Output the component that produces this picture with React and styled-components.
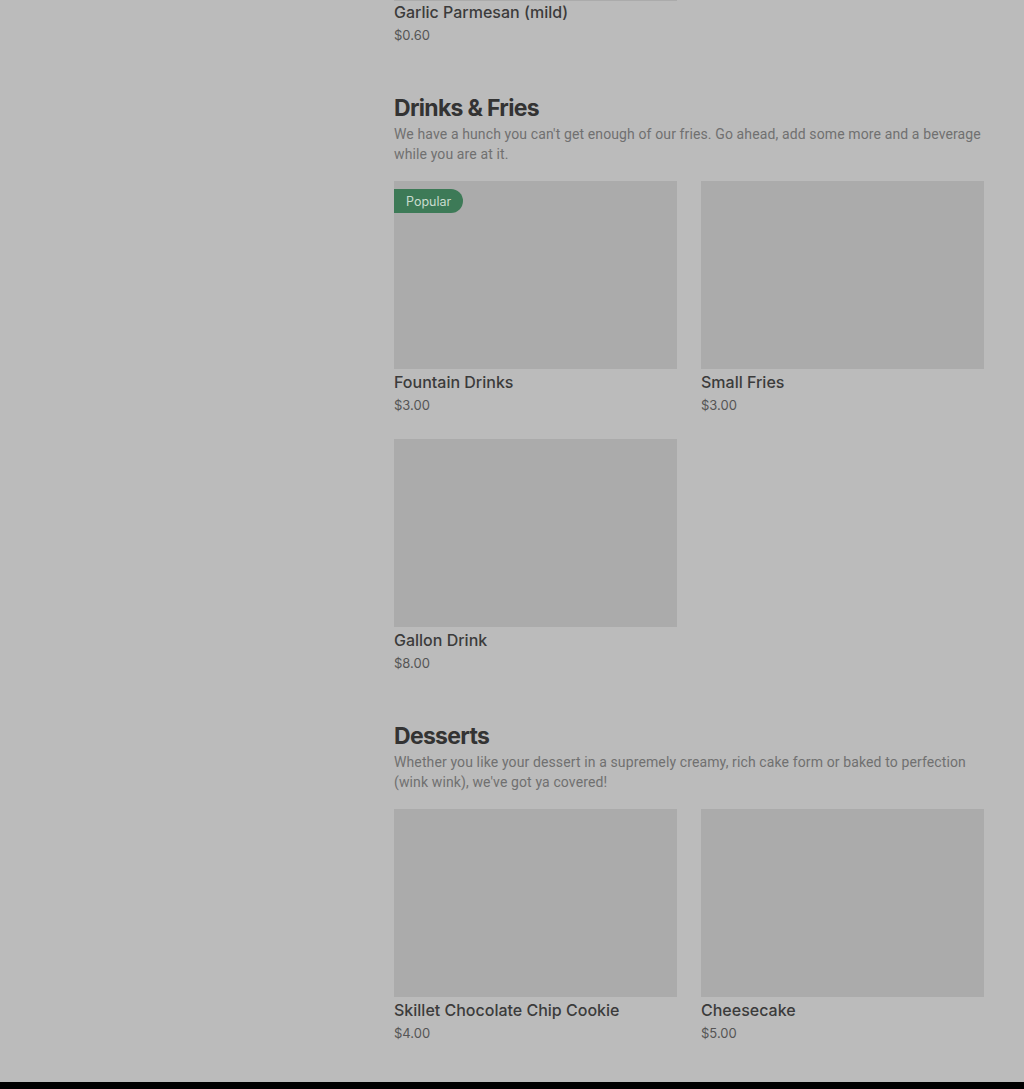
import styled, { createGlobalStyle } from 'styled-components'

const GlobalStyle = createGlobalStyle`
    body{
        margin: 0;
        background: #bbbbbb;
        font-family: Inter, "Noto Sans", sans-serif;
    }
`

const sections = [
    {
        title: 'Drinks & Fries',
        text: "We have a hunch you can't get enough of our fries. Go ahead, add some more and a beverage while you are at it.",
        items: [
            { name: 'Fountain Drinks', price: '$3.00', popular: true },
            { name: 'Small Fries', price: '$3.00' },
            { name: 'Gallon Drink', price: '$8.00' },
        ],
    },
    {
        title: 'Desserts',
        text: "Whether you like your dessert in a supremely creamy, rich cake form or baked to perfection (wink wink), we've got ya covered!",
        items: [
            { name: 'Skillet Chocolate Chip Cookie', price: '$4.00' },
            { name: 'Cheesecake', price: '$5.00' },
        ],
    },
]

export default function App(){
    return(
        <>
            <GlobalStyle />
            <Page>
                <Sidebar />
                <Menu>
                    <Grid>
                        <Card>
                            <Photo $tail />
                            <ItemName>Garlic Parmesan (mild)</ItemName>
                            <Price>$0.60</Price>
                        </Card>
                    </Grid>
                    {sections.map(s => (
                        <Section key={s.title}>
                            <Heading>{s.title}</Heading>
                            <Blurb>{s.text}</Blurb>
                            <Grid>
                                {s.items.map(item => (
                                    <Card key={item.name}>
                                        <Photo>
                                            {item.popular && <Badge>Popular</Badge>}
                                        </Photo>
                                        <ItemName>{item.name}</ItemName>
                                        <Price>{item.price}</Price>
                                    </Card>
                                ))}
                            </Grid>
                        </Section>
                    ))}
                </Menu>
            </Page>
            <Footer />
        </>
    )
}

const Page = styled.div`
    display: grid;
    grid-template-columns: 394px 590px;
    padding-bottom: 39px;
`

const Sidebar = styled.aside``

const Menu = styled.main`
    display: flex;
    flex-direction: column;
    margin-top: -2px;
`

const Section = styled.section`
    margin-top: 47px;
`

const Heading = styled.h2`
    margin: 0;
    font-size: 23px;
    line-height: 32px;
    font-weight: 700;
    letter-spacing: -0.7px;
    color: #333333;
`

const Blurb = styled.p`
    margin: 0 0 17px;
    font-family: Roboto, "Noto Sans", sans-serif;
    font-size: 14px;
    line-height: 20px;
    letter-spacing: 0.12px;
    color: #707070;
`

const Grid = styled.div`
    display: grid;
    grid-template-columns: 283px 283px;
    column-gap: 24px;
    row-gap: 24px;
`

const Card = styled.div`
    display: flex;
    flex-direction: column;
`

const Photo = styled.div`
    position: relative;
    height: ${p => p.$tail ? '3px' : '188px'};
    margin-bottom: ${p => p.$tail ? '-2px' : '0'};
    background: #ababab;
`

const Badge = styled.span`
    position: absolute;
    top: 8px;
    left: 0;
    height: 24px;
    padding: 0 12px;
    display: flex;
    align-items: center;
    background: #3d7a57;
    color: #c9dccf;
    font-size: 12.5px;
    border-radius: 0 12px 12px 0;
`

const ItemName = styled.div`
    margin-top: 3px;
    font-size: 16px;
    line-height: 20px;
    font-weight: 500;
    color: #3b3b3b;
`

const Price = styled.div`
    margin-top: 3px;
    font-size: 13px;
    line-height: 20px;
    color: #555555;
`

const Footer = styled.footer`
    height: 200px;
    background: #000000;
`
